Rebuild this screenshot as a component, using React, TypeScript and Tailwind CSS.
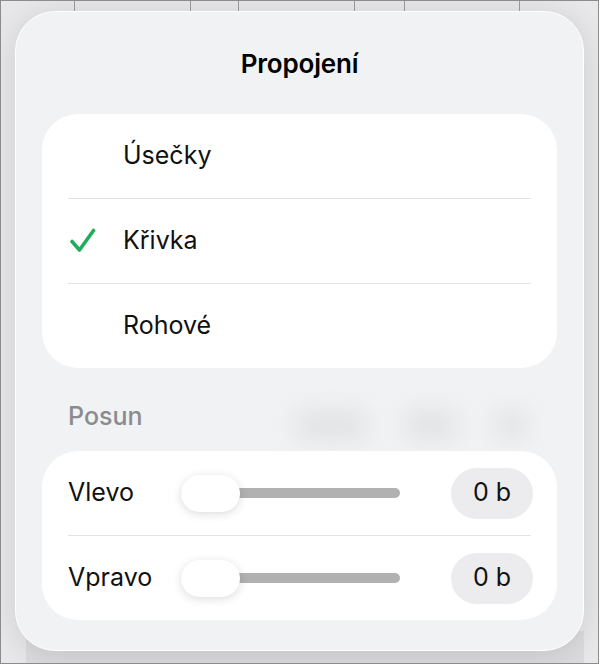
import React from 'react';

const font = { fontFamily: 'Inter, "Noto Sans", sans-serif' };

function Check() {
  return (
    <svg width="28" height="28" viewBox="0 0 28 28" className="block">
      <path
        d="M4 14.5 L11.5 23 L25.5 3.5"
        fill="none"
        stroke="#1fae5b"
        strokeWidth="3.6"
        strokeLinecap="round"
        strokeLinejoin="round"
      />
    </svg>
  );
}

function OptionRow({ label, checked }: { label: string; checked?: boolean }) {
  return (
    <div className="h-[84px] flex items-center pl-[26px]">
      <div className="w-[55px] flex items-center">{checked && <Check />}</div>
      <span className="text-[25px] text-[#111]">{label}</span>
    </div>
  );
}

function SliderRow({ label }: { label: string }) {
  return (
    <div className="h-[84px] flex items-center pl-[26px] pr-[24px]">
      <span className="w-[113px] text-[25px] text-[#111]">{label}</span>
      <div className="relative w-[219px] h-[37px] flex items-center">
        <div className="w-full h-[10px] rounded-full bg-[#b1b1b1]" />
        <div className="absolute left-0 top-0 w-[59px] h-[37px] rounded-full bg-white shadow-[0_2px_10px_rgba(0,0,0,0.14)]" />
      </div>
      <div className="ml-auto w-[82px] h-[51px] rounded-full bg-[#ececee] flex items-center justify-center text-[25px] text-[#111]">
        0 b
      </div>
    </div>
  );
}

export default function App() {
  const lines = [74, 190, 238, 354, 404, 519];
  return (
    <div style={font} className="w-[601px] h-[665px] bg-white">
      <div className="relative w-[599px] h-[664px] border border-[#8c8c8c] bg-[#e8e8ea] overflow-hidden">
        {/* blurred table behind the popover */}
        {lines.map((x) => (
          <div key={x} className="absolute top-0 w-px h-[12px] bg-[#9c9c9c]" style={{ left: x - 1 }} />
        ))}
        <div className="absolute left-[25px] right-[14px] top-[630px] bottom-0 bg-[#dcdcde]" />

        <div className="relative ml-[14px] mt-[10px] w-[569px] h-[640px] rounded-[40px] bg-[#f1f2f3] border border-white shadow-[0_4px_30px_rgba(0,0,0,0.12)] px-[26px] flex flex-col">
          {/* faint blurred content seen through the sheet */}
          <div className="absolute left-[280px] top-[398px] w-[240px] h-[30px] flex gap-[40px] blur-md opacity-60">
            <div className="w-[70px] h-full rounded bg-[#d8d8da]" />
            <div className="w-[50px] h-full rounded bg-[#d8d8da]" />
            <div className="w-[30px] h-full rounded bg-[#d8d8da]" />
          </div>

          <div className="h-[102px] flex items-center justify-center">
            <h1 className="text-[26px] font-semibold text-black tracking-[-0.2px]">Propojení</h1>
          </div>

          <div className="relative rounded-[36px] bg-white">
            <OptionRow label="Úsečky" />
            <div className="mx-[26px] h-px bg-[#e2e2e4]" />
            <OptionRow label="Křivka" checked />
            <div className="mx-[26px] h-px bg-[#e2e2e4]" />
            <OptionRow label="Rohové" />
          </div>

          <div className="relative h-[83px] pl-[26px] pt-[33px]">
            <span className="text-[25px] font-medium text-[#8b8b8f] leading-[30px]">Posun</span>
          </div>

          <div className="relative rounded-[36px] bg-white">
            <SliderRow label="Vlevo" />
            <div className="mx-[26px] h-px bg-[#e2e2e4]" />
            <SliderRow label="Vpravo" />
          </div>
        </div>
      </div>
    </div>
  );
}
